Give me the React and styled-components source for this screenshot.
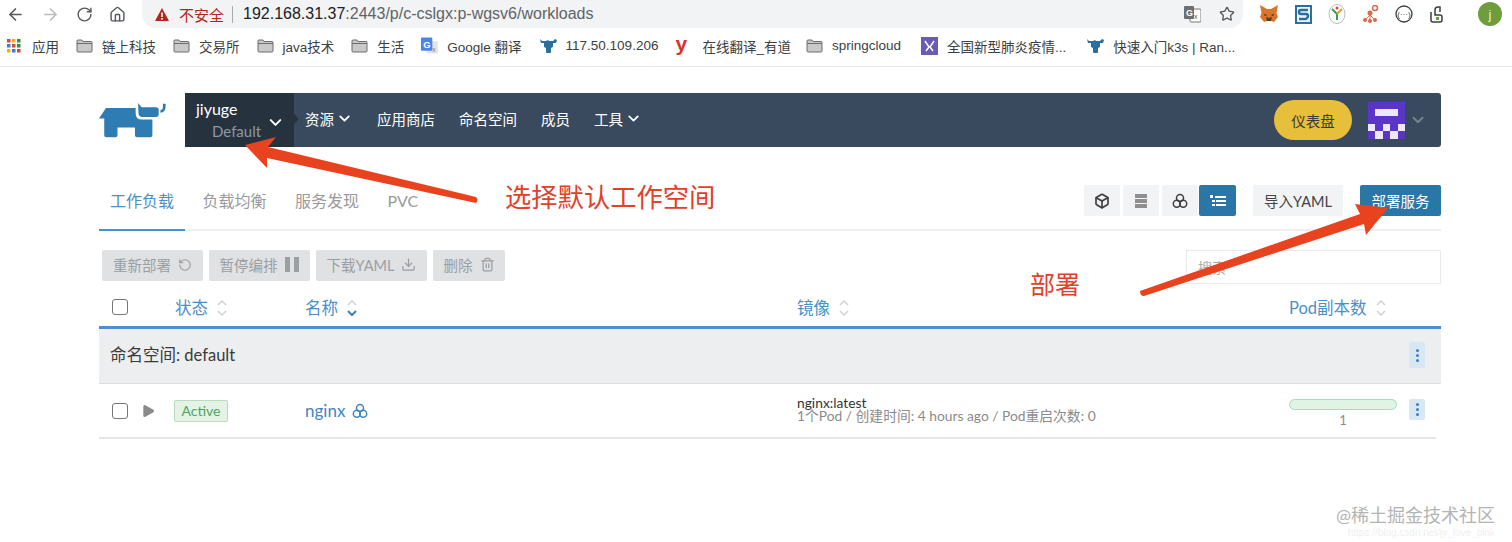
import styled, { createGlobalStyle } from "styled-components";
import { ArrowLeft, ArrowRight, RotateCw, Home, Star, ChevronDown, RotateCcw, Download, Trash2, Box, Play } from "lucide-react";

const GlobalStyle = createGlobalStyle`
  html, body { margin: 0; padding: 0; background: #fff; }
  body { font-family: Lato, "Noto Sans CJK SC", sans-serif; overflow: hidden; }
  * { box-sizing: border-box; }
`;

const Page = styled.div`
  position: relative;
  width: 1512px;
  height: 542px;
  overflow: hidden;
`;

/* ---------- browser chrome ---------- */
const Chrome = styled.div`
  height: 67px;
  border-bottom: 1px solid #e4e4e4;
  font-family: "Liberation Sans", "Noto Sans CJK SC", sans-serif;
`;

const Toolbar = styled.div`
  display: flex;
  align-items: center;
  height: 28px;
  padding-left: 6px;
`;

const NavIcons = styled.div`
  display: flex;
  align-items: center;
  gap: 16px;
  width: 136px;
`;

const NavIcon = styled.span`
  display: flex;
  color: ${(p) => (p.$off ? "#b8babd" : "#55585c")};
`;

const Omnibox = styled.div`
  display: flex;
  align-items: center;
  width: 1101px;
  height: 28px;
  padding: 0 8px 0 13px;
  background: #f1f3f4;
  border-radius: 0 0 14px 14px;
`;

const Warn = styled.span`
  display: flex;
  align-items: center;
  gap: 10px;
  color: #b3261e;
  font-size: 15px;
  padding-right: 8px;
  border-right: 1px solid #aaa;
  height: 17px;
`;

const Url = styled.span`
  margin-left: 10px;
  font-size: 16px;
  color: #5f6368;
  b { font-weight: 400; color: #202124; }
`;

const OmniRight = styled.div`
  margin-left: auto;
  display: flex;
  align-items: center;
  gap: 18px;
  color: #55585c;
`;

const Extensions = styled.div`
  display: flex;
  align-items: center;
  gap: 16px;
  margin-left: 16px;
`;

const UserDot = styled.span`
  display: flex;
  align-items: center;
  justify-content: center;
  width: 24px;
  height: 24px;
  margin-left: 18px;
  border-radius: 50%;
  background: #6f9c3d;
  color: #e8f0dc;
  font-size: 13px;
`;

const Bookmarks = styled.div`
  display: flex;
  align-items: center;
  height: 35px;
  padding-left: 7px;
  gap: 17px;
  font-size: 13.500px;
  color: #3c4043;
`;

const Bookmark = styled.span`
  display: flex;
  align-items: center;
  gap: ${(p) => p.$gap || 9}px;
  margin-left: ${(p) => p.$ml || 0}px;
  white-space: nowrap;
`;

const Folder = () => (
  <svg width="17" height="14" viewBox="0 0 17 14">
    <path d="M1 3V2q0-1 1-1h4l1 1.500h8q1 0 1 1V12q0 1-1 1H2q-1 0-1-1Z" fill="#c9c9c9" stroke="#6d6d6d" strokeWidth="1" />
    <path d="M1 4.500H16" stroke="#6d6d6d" />
  </svg>
);

const AppsGrid = () => {
  const colors = ["#d9453a", "#f0b400", "#3d8b3d", "#3a7be0", "#d9453a", "#3d8b3d", "#f0b400", "#3a7be0", "#d9453a"];
  return (
    <svg width="14" height="14" viewBox="0 0 14 14">
      {colors.map((c, i) => (
        <rect key={i} x={(i % 3) * 5} y={Math.floor(i / 3) * 5} width="3.500" height="3.500" fill={c} />
      ))}
    </svg>
  );
};

const CowFavicon = () => (
  <svg width="17" height="17" viewBox="0 0 17 17">
    <path d="M0 2l2 2h4l2-1 1 1h4l2-2 2 1-1 3h-3v4l-2 1v4q0 1-1 1H7q-1 0-1-1v-4L4 10V6H1Z" fill="#2a6f9e" />
  </svg>
);

const GoogleTranslateIcon = () => (
  <svg width="17" height="18" viewBox="0 0 18 18">
    <rect x="6" y="4" width="12" height="13" rx="1" fill="#e4e4e4" />
    <rect x="0" y="0" width="12" height="14" rx="1" fill="#4b84ea" />
    <text x="2.500" y="11" fontSize="10" fontWeight="700" fill="#fff" fontFamily="Liberation Sans">G</text>
    <text x="12" y="15" fontSize="7" fill="#777" fontFamily="Liberation Sans">x</text>
  </svg>
);

const TranslateIcon = () => (
  <svg width="17" height="17" viewBox="0 0 17 17">
    <rect x="6" y="3" width="11" height="13" rx="1" fill="#fff" stroke="#777" />
    <rect x="0" y="0" width="10" height="13" rx="1" fill="#6b6e72" />
    <text x="2" y="10" fontSize="9" fontWeight="700" fill="#fff" fontFamily="Liberation Sans">G</text>
    <text x="10" y="13" fontSize="7" fill="#555" fontFamily="Liberation Sans">x</text>
  </svg>
);

const FoxIcon = () => (
  <svg width="20" height="18" viewBox="0 0 20 18">
    <path d="M1 0l7 4h4l7-4-1.500 8L19 12l-4 5-3-1H8l-3 1-4-5 1.500-4Z" fill="#d9752a" />
    <path d="M7 12l3 1 3-1-1 4H8Z" fill="#5a3a22" />
    <path d="M5 9l3 1-2 1ZM15 9l-3 1 2 1Z" fill="#33241a" />
  </svg>
);

const StackIcon = () => (
  <svg width="17" height="19" viewBox="0 0 17 19">
    <rect width="17" height="19" fill="#2a6f9e" />
    <rect x="2" y="2" width="13" height="15" fill="#f0f4f8" />
    <path d="M13 5H6Q4 5 4 7t2 2h5q2 0 2 2t-2 3H4" fill="none" stroke="#2a6f9e" strokeWidth="2.500" />
  </svg>
);

const YIcon = () => (
  <svg width="18" height="20" viewBox="0 0 18 20">
    <ellipse cx="9" cy="10" rx="8" ry="9.500" fill="#fff" stroke="#bbb" />
    <path d="M4 5l5 5V16" fill="none" stroke="#3d9a55" strokeWidth="2" />
    <path d="M14 5l-5 5" fill="none" stroke="#d9a02a" strokeWidth="2" />
    <circle cx="9" cy="4" r="1.500" fill="#d9453a" />
  </svg>
);

const NodesIcon = () => (
  <svg width="17" height="19" viewBox="0 0 17 19">
    <circle cx="13" cy="3" r="2.500" fill="none" stroke="#d96a4a" strokeWidth="1.500" />
    <circle cx="8" cy="8" r="2.500" fill="#d96a4a" />
    <circle cx="3" cy="15" r="2" fill="#d96a4a" />
    <circle cx="8" cy="16" r="2" fill="#d96a4a" />
    <circle cx="13" cy="15" r="2" fill="#d96a4a" />
    <path d="M8 8V16M8 10L3 15M8 10L13 15" stroke="#d96a4a" />
  </svg>
);

const CodeCircle = () => (
  <svg width="18" height="18" viewBox="0 0 18 18">
    <circle cx="9" cy="9" r="8" fill="none" stroke="#3c4043" strokeWidth="1.300" />
    <text x="9" y="12" fontSize="8" textAnchor="middle" fill="#3c4043" fontFamily="Liberation Sans">(···)</text>
  </svg>
);

const LeafIcon = () => (
  <svg width="15" height="19" viewBox="0 0 15 19">
    <path d="M2 7V15q0 2 2 2h7q2 0 2-2v-3q0-2-2-2H6V5q0-3 3-3h2v5" fill="none" stroke="#3c4043" strokeWidth="1.500" />
    <rect x="7" y="12" width="3" height="3" fill="#6f9c3d" />
  </svg>
);

const YoudaoIcon = styled.span`
  width: 18px;
  font-size: 21px;
  line-height: 16px;
  height: 20px;
  font-weight: 700;
  color: #d9322a;
`;

const VirusIcon = () => (
  <svg width="17" height="18" viewBox="0 0 17 18">
    <rect width="17" height="18" fill="#6a5bb8" />
    <path d="M4 4l4 6-3 4M13 4L9 10l3 4" fill="none" stroke="#fff" strokeWidth="1.500" />
  </svg>
);

/* ---------- header ---------- */
const Main = styled.div`
  padding: 26px 71px 0 99px;
`;

const Header = styled.div`
  display: flex;
  height: 54px;
`;

const LogoSlot = styled.div`
  display: flex;
  align-items: center;
  width: 86px;
`;

const Nav = styled.div`
  flex: 1;
  display: flex;
  align-items: center;
  background: #3a4a5e;
  border-radius: 0 3px 3px 0;
  color: #fff;
  font-size: 14px;
`;

const ClusterBox = styled.div`
  position: relative;
  width: 109px;
  height: 100%;
  padding: 7px 0 0 11px;
  background: #27323f;
  &::after {
    content: "";
    position: absolute;
    right: -5px;
    top: 21px;
    border-left: 5px solid #27323f;
    border-top: 5px solid transparent;
    border-bottom: 5px solid transparent;
  }
`;

const ClusterName = styled.div`
  font-size: 16px;
  line-height: 18px;
  color: #fff;
`;

const ProjectName = styled.div`
  margin: 4px 0 0 16px;
  font-size: 15px;
  line-height: 18px;
  color: #8d98a5;
`;

const ClusterChevron = styled(ChevronDown)`
  position: absolute;
  right: 9px;
  top: 20px;
`;

const NavLinks = styled.div`
  display: flex;
  align-items: center;
  gap: 24px;
  margin: 0 0 3px 11px;
`;

const NavLink = styled.span`
  display: flex;
  align-items: center;
  gap: 2px;
  font-size: 14.500px;
  white-space: nowrap;
`;

const DashButton = styled.div`
  display: flex;
  align-items: center;
  justify-content: center;
  width: 78px;
  height: 40px;
  margin-left: auto;
  border-radius: 20px;
  background: #e8bf3a;
  color: #3b3a2c;
  font-size: 14.500px;
`;

const UserMenu = styled.div`
  display: flex;
  align-items: center;
  gap: 4px;
  margin: 0 14px 0 16px;
  color: #77838f;
`;

const Avatar = () => (
  <svg width="37" height="38" viewBox="0 0 5 5" shapeRendering="crispEdges" style={{ display: "block" }}>
    <rect width="5" height="5" fill="#5a35c8" />
    <rect x="1" y="1" width="3" height="1" fill="#ece8f7" />
    <rect x="0" y="3" width="1" height="1" fill="#ece8f7" />
    <rect x="2" y="3" width="1" height="1" fill="#ece8f7" />
    <rect x="4" y="3" width="1" height="1" fill="#ece8f7" />
    <rect x="1" y="4" width="1" height="1" fill="#ece8f7" />
    <rect x="3" y="4" width="1" height="1" fill="#ece8f7" />
  </svg>
);

const RancherLogo = () => (
  <svg width="67" height="35" viewBox="25 56 192 100">
    <g fill="#2e7cb1">
      <path d="M25 100L45 70H130V85Q130 103 148 103H178V148Q178 154 172 154H134Q128 154 128 148V126H78V148Q78 154 72 154H46Q40 154 40 148V100Z" />
      <path d="M137 56L147 68H188Q196 68 196 76V88Q196 96 188 96H150Q138 96 138 84Z" />
      <path d="M201 84Q218 82 216 58H208V68Q208 76 201 76Z" />
    </g>
  </svg>
);

/* ---------- tabs ---------- */
const TabBar = styled.div`
  display: flex;
  justify-content: space-between;
  height: 46px;
  margin-top: 38px;
  border-bottom: 2px solid #edeff1;
  position: relative;
  &::after {
    content: "";
    position: absolute;
    left: 0;
    bottom: -2px;
    width: 86px;
    height: 2px;
    background: #4a90c8;
  }
`;

const Tabs = styled.div`
  display: flex;
  gap: 28.500px;
  padding: 6px 0 0 11px;
`;

const Tab = styled.span`
  font-size: 16px;
  line-height: 20px;
  color: ${(p) => (p.$active ? "#4a8fc7" : "#9a9a9a")};
`;

const TabTools = styled.div`
  display: flex;
  align-items: flex-start;
`;

const ViewToggle = styled.div`
  display: flex;
  gap: 3px;
  margin-right: 17px;
`;

const ViewButton = styled.span`
  display: flex;
  align-items: center;
  justify-content: center;
  width: ${(p) => (p.$active ? 37 : 36)}px;
  height: 31px;
  margin-left: ${(p) => (p.$active ? -2 : 0)}px;
  border-radius: 2px;
  background: ${(p) => (p.$active ? "#2a76a8" : "#f2f3f4")};
  color: ${(p) => (p.$active ? "#fff" : "#3c4043")};
`;

const ImportButton = styled.span`
  display: flex;
  align-items: center;
  justify-content: center;
  height: 31px;
  width: 90px;
  border-radius: 2px;
  background: #f2f3f4;
  color: #444;
  font-size: 14.500px;
`;

const DeployButton = styled(ImportButton)`
  width: 81px;
  margin-left: 17px;
  background: #2a76a8;
  color: #fff;
`;

/* ---------- action row ---------- */
const ActionRow = styled.div`
  display: flex;
  align-items: flex-start;
  height: 46px;
  margin-top: 19px;
  padding-left: 3px;
`;

const ActionGroup = styled.div`
  display: flex;
  gap: 6px;
`;

const ActionButton = styled.span`
  display: flex;
  align-items: center;
  justify-content: center;
  gap: 7px;
  width: ${(p) => p.$w}px;
  height: 31px;
  padding-bottom: 2px;
  border-radius: 2px;
  background: #dfe1e3;
  color: #9a9fa3;
  font-size: 14.500px;
  white-space: nowrap;
`;

const SearchBox = styled.div`
  width: 255px;
  height: 34px;
  margin-left: auto;
  padding: 8px 11px;
  border: 1px solid #e8eaec;
  background: #fff;
  color: #aaa;
  font-size: 14px;
  line-height: 18px;
`;

/* ---------- table ---------- */
const columns = "76px 130px 492px 492px 1fr";

const HeadRow = styled.div`
  display: grid;
  grid-template-columns: ${columns};
  align-items: center;
  height: 33px;
  border-bottom: 3px solid #4a90d0;
  padding-bottom: 6px;
`;

const HeadCell = styled.span`
  display: flex;
  align-items: center;
  gap: 8px;
  font-size: 16.500px;
  line-height: 20px;
  color: #4a8fc7;
`;

const CheckBox = styled.span`
  display: block;
  width: 16px;
  height: 16px;
  margin-left: 13px;
  border: 1.500px solid #777;
  border-radius: 3px;
  background: #fff;
`;

const HeadCheck = styled(CheckBox)`
  margin-bottom: 3px;
`;

const GroupRow = styled.div`
  display: flex;
  align-items: center;
  justify-content: space-between;
  height: 55px;
  padding: 0 16px 2px 11px;
  background: #eceef0;
  border-bottom: 1px solid #dcdee0;
  font-size: 16.500px;
  color: #3a3a3a;
`;

const GroupLabel = styled.span`
  margin-bottom: 2px;
`;

const KebabButton = styled.span`
  display: flex;
  flex-direction: column;
  align-items: center;
  justify-content: center;
  gap: 2px;
  width: 16px;
  height: ${(p) => p.$h}px;
  border-radius: 2px;
  background: #d8e7f4;
  i {
    width: 3px;
    height: 3px;
    border-radius: 50%;
    background: #3a7fc0;
  }
`;

const DataRow = styled.div`
  display: grid;
  grid-template-columns: ${columns};
  align-items: center;
  height: 55px;
  border-bottom: 2px solid #e4e5e7;
  margin-right: 5px;
`;

const RowToggle = styled.span`
  display: flex;
  align-items: center;
  gap: 12px;
  color: #8a8a8a;
`;

const Badge = styled.span`
  display: inline-flex;
  align-items: center;
  justify-content: center;
  width: 54px;
  height: 22px;
  margin-left: -1px;
  border: 1px solid #b9dcc0;
  border-radius: 2px;
  background: #e3f4e6;
  color: #4fa35f;
  font-size: 14px;
`;

const NameLink = styled.span`
  display: flex;
  align-items: center;
  gap: 7px;
  color: #3f87c5;
  font-size: 17px;
`;

const ImageCell = styled.div`
  font-size: 13.800px;
  line-height: 13px;
  color: #333;
  padding-bottom: 4px;
`;

const ImageMeta = styled.div`
  color: #8b8b8b;
  white-space: nowrap;
`;

const ScaleCell = styled.div`
  display: flex;
  align-items: flex-start;
  gap: 12px;
  padding-top: 7px;
`;

const ScaleBar = styled.div`
  width: 108px;
  text-align: center;
  font-size: 13px;
  line-height: 17px;
  color: #8b8b8b;
`;

const ScaleTrack = styled.div`
  height: 11px;
  margin-bottom: 2px;
  border: 1px solid #a8dcb4;
  border-radius: 6px;
  background: #dff4e4;
`;

/* ---------- annotations drawn on top of the screenshot ---------- */
const ArrowLayer = styled.svg`
  position: absolute;
  left: 0;
  top: 0;
  width: 1512px;
  height: 542px;
  pointer-events: none;
`;

const Note = styled.span`
  position: absolute;
  left: ${(p) => p.$x}px;
  top: ${(p) => p.$y}px;
  font-size: ${(p) => p.$size}px;
  line-height: 1;
  color: #e2402a;
  white-space: nowrap;
`;

const Watermark = styled.div`
  position: absolute;
  right: 17px;
  top: 504px;
  font-size: 18px;
  line-height: 22px;
  color: #b4b4b4;
`;

const WatermarkUrl = styled.div`
  position: absolute;
  right: 17px;
  top: 527px;
  font-family: "Liberation Sans", sans-serif;
  font-size: 10px;
  color: #f0f0f0;
`;

const SortIcon = ({ active }) => (
  <svg width="12" height="20" viewBox="0 0 12 20" fill="none" strokeWidth="1.500">
    <path d="M2 7l4-4 4 4" stroke="#ccd3da" />
    <path d="M2 13l4 4 4-4" stroke={active ? "#3f7fbf" : "#ccd3da"} strokeWidth={active ? 2 : 1.500} />
  </svg>
);

const TriCircles = ({ size = 16, color = "#3c4043" }) => (
  <svg width={size} height={size} viewBox="0 0 16 16" fill="none" stroke={color} strokeWidth="1.500">
    <circle cx="8" cy="5" r="3.500" />
    <circle cx="4.800" cy="10.700" r="3.500" />
    <circle cx="11.200" cy="10.700" r="3.500" />
  </svg>
);

const ServerIcon = () => (
  <svg width="14" height="16" viewBox="0 0 14 16">
    <rect x="1" y="1" width="12" height="4" fill="#8f8f8f" />
    <rect x="1" y="6" width="12" height="4" fill="#8f8f8f" />
    <rect x="1" y="11" width="12" height="4" fill="#8f8f8f" />
  </svg>
);

const ListIcon = () => (
  <svg width="16" height="14" viewBox="0 0 16 14" fill="#fff">
    <rect x="0" y="1" width="3" height="3" />
    <rect x="5" y="2" width="11" height="2" />
    <rect x="2" y="6" width="3" height="2" />
    <rect x="6" y="6" width="10" height="2" />
    <rect x="2" y="10" width="3" height="2" />
    <rect x="6" y="10" width="10" height="2" />
  </svg>
);

const PauseBars = () => (
  <svg width="15" height="15" viewBox="0 0 15 15" fill="#9a9fa3">
    <rect x="0" y="0" width="5" height="15" />
    <rect x="9" y="0" width="5" height="15" />
  </svg>
);

const Kebab = ({ h }) => (
  <KebabButton $h={h}>
    <i />
    <i />
    <i />
  </KebabButton>
);

const bookmarks = [
  { icon: <Folder />, label: "链上科技" },
  { icon: <Folder />, label: "交易所" },
  { icon: <Folder />, label: "java技术" },
  { icon: <Folder />, label: "生活" },
  { icon: <GoogleTranslateIcon />, label: "Google 翻译" },
  { icon: <CowFavicon />, label: "117.50.109.206", ml: 1 },
  { icon: <YoudaoIcon>y</YoudaoIcon>, label: "在线翻译_有道" },
  { icon: <Folder />, label: "springcloud", ml: -2 },
  { icon: <VirusIcon />, label: "全国新型肺炎疫情...", ml: 3 },
  { icon: <CowFavicon />, label: "快速入门k3s | Ran...", ml: 4 },
];

export default function App() {
  return (
    <Page>
      <GlobalStyle />
      <Chrome>
        <Toolbar>
          <NavIcons>
            <NavIcon><ArrowLeft size={19} /></NavIcon>
            <NavIcon $off><ArrowRight size={19} /></NavIcon>
            <NavIcon><RotateCw size={17} /></NavIcon>
            <NavIcon><Home size={17} /></NavIcon>
          </NavIcons>
          <Omnibox>
            <Warn>
              <svg width="14" height="13" viewBox="0 0 14 13">
                <path d="M7 0l7 13H0Z" fill="#b3261e" />
                <rect x="6.200" y="4.500" width="1.600" height="4.500" fill="#fff" />
                <rect x="6.200" y="10" width="1.600" height="1.600" fill="#fff" />
              </svg>
              不安全
            </Warn>
            <Url><b>192.168.31.37</b>:2443/p/c-cslgx:p-wgsv6/workloads</Url>
            <OmniRight>
              <TranslateIcon />
              <Star size={16} />
            </OmniRight>
          </Omnibox>
          <Extensions>
            <FoxIcon />
            <StackIcon />
            <YIcon />
            <NodesIcon />
            <CodeCircle />
            <LeafIcon />
            <UserDot>j</UserDot>
          </Extensions>
        </Toolbar>
        <Bookmarks>
          <Bookmark $gap={11}><AppsGrid />应用</Bookmark>
          {bookmarks.map((b) => (
            <Bookmark key={b.label} $ml={b.ml}>{b.icon}{b.label}</Bookmark>
          ))}
        </Bookmarks>
      </Chrome>

      <Main>
        <Header>
          <LogoSlot><RancherLogo /></LogoSlot>
          <Nav>
            <ClusterBox>
              <ClusterName>jiyuge</ClusterName>
              <ProjectName>Default</ProjectName>
              <ClusterChevron size={19} strokeWidth={2.500} />
            </ClusterBox>
            <NavLinks>
              <NavLink>资源<ChevronDown size={17} strokeWidth={2.500} /></NavLink>
              <NavLink>应用商店</NavLink>
              <NavLink>命名空间</NavLink>
              <NavLink>成员</NavLink>
              <NavLink>工具<ChevronDown size={17} strokeWidth={2.500} /></NavLink>
            </NavLinks>
            <DashButton>仪表盘</DashButton>
            <UserMenu>
              <Avatar />
              <ChevronDown size={18} strokeWidth={2.500} />
            </UserMenu>
          </Nav>
        </Header>

        <TabBar>
          <Tabs>
            <Tab $active>工作负载</Tab>
            <Tab>负载均衡</Tab>
            <Tab>服务发现</Tab>
            <Tab>PVC</Tab>
          </Tabs>
          <TabTools>
            <ViewToggle>
              <ViewButton><Box size={16} strokeWidth={2.500} /></ViewButton>
              <ViewButton><ServerIcon /></ViewButton>
              <ViewButton><TriCircles /></ViewButton>
              <ViewButton $active><ListIcon /></ViewButton>
            </ViewToggle>
            <ImportButton>导入YAML</ImportButton>
            <DeployButton>部署服务</DeployButton>
          </TabTools>
        </TabBar>

        <ActionRow>
          <ActionGroup>
            <ActionButton $w={101}>重新部署<RotateCcw size={14} /></ActionButton>
            <ActionButton $w={101}>暂停编排<PauseBars /></ActionButton>
            <ActionButton $w={111}>下载YAML<Download size={15} /></ActionButton>
            <ActionButton $w={72}>删除<Trash2 size={15} /></ActionButton>
          </ActionGroup>
          <SearchBox>搜索</SearchBox>
        </ActionRow>

        <HeadRow>
          <HeadCheck />
          <HeadCell>状态<SortIcon /></HeadCell>
          <HeadCell>名称<SortIcon active /></HeadCell>
          <HeadCell>镜像<SortIcon /></HeadCell>
          <HeadCell>Pod副本数<SortIcon /></HeadCell>
        </HeadRow>

        <GroupRow>
          <GroupLabel>命名空间: default</GroupLabel>
          <Kebab h={26} />
        </GroupRow>

        <DataRow>
          <RowToggle>
            <CheckBox />
            <Play size={16} fill="currentColor" strokeWidth={0} />
          </RowToggle>
          <span><Badge>Active</Badge></span>
          <NameLink>nginx<TriCircles color="#3f87c5" /></NameLink>
          <ImageCell>
            nginx:latest
            <ImageMeta>1个Pod / 创建时间: 4 hours ago / Pod重启次数: 0</ImageMeta>
          </ImageCell>
          <ScaleCell>
            <ScaleBar>
              <ScaleTrack />
              1
            </ScaleBar>
            <Kebab h={21} />
          </ScaleCell>
        </DataRow>
      </Main>

      <ArrowLayer viewBox="0 0 1512 542">
        <path d="M245 145L276 137L268 147L476 197Q479 200 476 203L267 158L267 168Z" fill="#e8421f" />
        <path d="M1388 208L1355 204L1360 214L1140 291Q1140 296 1144 296L1364 224L1366 235Z" fill="#e8421f" />
      </ArrowLayer>
      <Note $x={505} $y={184} $size={26.300}>选择默认工作空间</Note>
      <Note $x={1030} $y={272} $size={25}>部署</Note>
      <Watermark>@稀土掘金技术社区</Watermark>
      <WatermarkUrl>https://blog.csdn.net/jy_love_pink</WatermarkUrl>
    </Page>
  );
}
